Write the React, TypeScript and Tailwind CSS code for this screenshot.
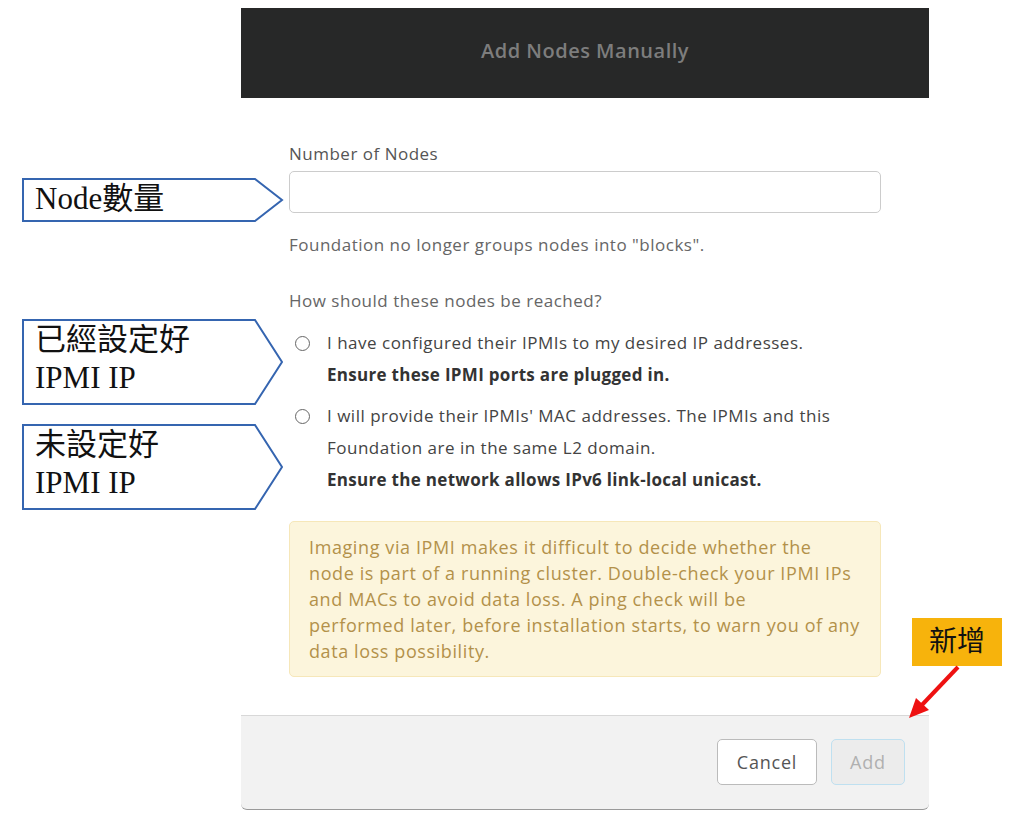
import React from "react";

const ui = { fontFamily: "'Open Sans', Lato, sans-serif" };
const serif = { fontFamily: "'Liberation Serif', 'Noto Sans CJK TC', serif" };

function Callout({ top, height, lines }: { top: number; height: number; lines: string[] }) {
  return (
    <div className="absolute left-[22px] w-[262px]" style={{ top, height }}>
      <svg className="absolute inset-0" width="262" height={height} viewBox={`0 0 262 ${height}`}>
        <polygon
          points={`1,1 233,1 260,${height / 2} 233,${height - 1} 1,${height - 1}`}
          fill="white"
          stroke="#3565b0"
          strokeWidth="2"
        />
      </svg>
      <div className="relative pl-[13px] pt-[2px] text-[31px] leading-[38px] text-[#111]" style={serif}>
        {lines.map((l) => (
          <div key={l}>{l}</div>
        ))}
      </div>
    </div>
  );
}

function Radio() {
  return <span className="mt-[9px] h-[15px] w-[15px] shrink-0 rounded-full border-[1.5px] border-[#666]" />;
}

const alertLines = [
  "Imaging via IPMI makes it difficult to decide whether the",
  "node is part of a running cluster. Double-check your IPMI IPs",
  "and MACs to avoid data loss. A ping check will be",
  "performed later, before installation starts, to warn you of any",
  "data loss possibility.",
];

export default function App() {
  return (
    <div className="relative h-[817px] w-[1013px] overflow-hidden bg-white" style={ui}>
      <div className="ml-[241px] mt-[8px] flex w-[688px] flex-col">
        <div className="flex h-[90px] items-center justify-center bg-[#272828] pb-[4px]">
          <span className="text-[20px] font-semibold tracking-[0.5px] text-[#7d7d7d]">Add Nodes Manually</span>
        </div>
        <div className="flex flex-col px-[48px] pt-[46px] text-[17px] tracking-[0.5px] text-[#555]">
          <label className="leading-[20px]">Number of Nodes</label>
          <input className="mt-[7px] h-[42px] rounded-[5px] border border-[#ccc] bg-white" />
          <div className="mt-[22px] leading-[20px] text-[#666]">Foundation no longer groups nodes into "blocks".</div>
          <div className="mt-[36px] leading-[20px] text-[#666]">How should these nodes be reached?</div>
          <div className="mt-[16px] flex gap-[17px] pl-[6px] leading-[32px] text-[#444]">
            <Radio />
            <div>
              <div>I have configured their IPMIs to my desired IP addresses.</div>
              <div className="font-bold tracking-[0.3px] text-[#333]">Ensure these IPMI ports are plugged in.</div>
            </div>
          </div>
          <div className="mt-[9px] flex gap-[17px] pl-[6px] leading-[32px] text-[#444]">
            <Radio />
            <div>
              <div>I will provide their IPMIs' MAC addresses. The IPMIs and this</div>
              <div>Foundation are in the same L2 domain.</div>
              <div className="font-bold tracking-[0.3px] text-[#333]">Ensure the network allows IPv6 link-local unicast.</div>
            </div>
          </div>
          <div className="mt-[25px] rounded-[5px] border border-[#f6e7b9] bg-[#fcf5dc] px-[19px] py-[12px] text-[18px] leading-[26px] tracking-[0.6px] text-[#b3914a]">
            {alertLines.map((l) => (
              <div key={l} className="whitespace-nowrap">{l}</div>
            ))}
          </div>
        </div>
        <div className="mt-[38px] flex h-[95px] justify-end gap-[14px] rounded-b-[6px] border-t border-b border-t-[#d8d8d8] border-b-[#9a9a9a] bg-[#f2f2f2] pr-[24px] pt-[23px]">
          <button className="h-[46px] w-[100px] rounded-[5px] border border-[#bbb] bg-white text-[18px] tracking-[0.8px] text-[#555]">
            Cancel
          </button>
          <button className="h-[46px] w-[74px] rounded-[5px] border border-[#bfe0f0] bg-[#ececec] text-[18px] tracking-[0.8px] text-[#b0b0b0]">
            Add
          </button>
        </div>
      </div>

      <Callout top={178} height={44} lines={["Node數量"]} />
      <Callout top={319} height={86} lines={["已經設定好", "IPMI IP"]} />
      <Callout top={424} height={86} lines={["未設定好", "IPMI IP"]} />

      <div
        className="absolute left-[912px] top-[618px] flex h-[48px] w-[90px] items-center justify-center bg-[#f7b30c] text-[28px] text-[#111]"
        style={serif}
      >
        新增
      </div>
      <svg className="absolute left-[900px] top-[660px]" width="70" height="70" viewBox="0 0 70 70">
        <line x1="58" y1="7" x2="20" y2="47" stroke="#ee1111" strokeWidth="4" />
        <polygon points="9,58 16,38 29,50" fill="#ee1111" />
      </svg>
    </div>
  );
}
